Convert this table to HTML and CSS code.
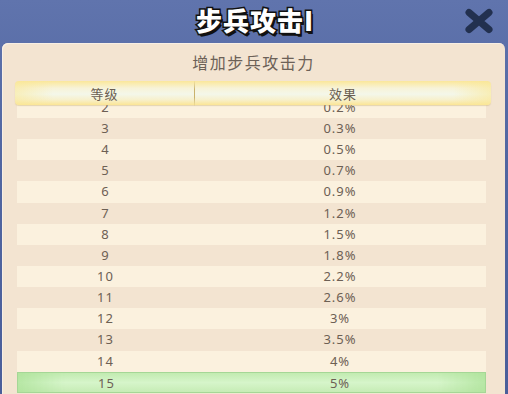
FILE: index.html
```html
<!DOCTYPE html>
<html lang="zh">
<head>
<meta charset="utf-8">
<title>步兵攻击I</title>
<link rel="stylesheet" href="styles.css">
</head>
<body>
<div class="window">
  <div class="titlebar">
    <h1 class="title">步兵攻击I</h1>
    <button class="close" aria-label="关闭">
      <svg width="30" height="26" viewBox="0 0 30 26"><path d="M5 4.5 L25 21.5 M25 4.5 L5 21.5" stroke="#22304f" stroke-width="7" stroke-linecap="round" fill="none"/></svg>
    </button>
  </div>
  <div class="panel">
    <div class="subtitle">增加步兵攻击力</div>
    <div class="thead">
      <div class="th">等级</div>
      <div class="th th-sep">效果</div>
    </div>
    <div class="list">
      <div class="rows">
        <div class="row"><span>2</span><span>0.2%</span></div>
        <div class="row"><span>3</span><span>0.3%</span></div>
        <div class="row"><span>4</span><span>0.5%</span></div>
        <div class="row"><span>5</span><span>0.7%</span></div>
        <div class="row"><span>6</span><span>0.9%</span></div>
        <div class="row"><span>7</span><span>1.2%</span></div>
        <div class="row"><span>8</span><span>1.5%</span></div>
        <div class="row"><span>9</span><span>1.8%</span></div>
        <div class="row"><span>10</span><span>2.2%</span></div>
        <div class="row"><span>11</span><span>2.6%</span></div>
        <div class="row"><span>12</span><span>3%</span></div>
        <div class="row"><span>13</span><span>3.5%</span></div>
        <div class="row"><span>14</span><span>4%</span></div>
        <div class="row current"><span>15</span><span>5%</span></div>
      </div>
    </div>
  </div>
</div>
</body>
</html>
```
FILE: styles.css
```css
html, body {
  margin: 0;
  padding: 0;
}
body {
  width: 508px;
  height: 394px;
  overflow: hidden;
  background: #4d609c;
  font-family: "Noto Sans", "Noto Sans CJK SC", sans-serif;
}
.window {
  display: flex;
  flex-direction: column;
  height: 394px;
  background: linear-gradient(to bottom, #6074ad 0%, #5166a1 40%, #4a5e9a 100%);
}
.titlebar {
  position: relative;
  height: 43px;
  flex: none;
  display: flex;
  align-items: center;
  justify-content: center;
}
.title {
  margin: 0;
  padding-left: 2px;
  font-family: "Noto Sans CJK SC", sans-serif;
  font-size: 26px;
  font-weight: 900;
  letter-spacing: 1px;
  line-height: 30px;
  color: #ffffff;
  -webkit-text-stroke: 3px #111111;
  paint-order: stroke fill;
  text-shadow: 1px 2px 0 #111111, 2px 3px 0 #111111;
  margin-top: -3px;
}
.close {
  position: absolute;
  left: 464px;
  top: 8px;
  width: 30px;
  height: 26px;
  padding: 0;
  border: 0;
  background: none;
  display: block;
}
.close svg {
  display: block;
}
.panel {
  flex: 1;
  margin-left: 2px;
  width: 503px;
  background: #f3e4d1;
  border-radius: 6px 6px 0 0;
  box-shadow: inset 1px 1px 0 #f8efe4;
  display: flex;
  flex-direction: column;
  overflow: hidden;
}
.subtitle {
  height: 38px;
  flex: none;
  box-sizing: border-box;
  padding-top: 7px;
  line-height: 24px;
  text-align: center;
  font-family: "Noto Sans CJK SC", sans-serif;
  font-size: 16px;
  letter-spacing: 1.5px;
  color: #6c6157;
}
.thead {
  flex: none;
  margin: 0 14px 0 13px;
  height: 24px;
  border-radius: 4px;
  display: grid;
  grid-template-columns: 179px 1fr;
  background:
    linear-gradient(to right, rgba(250, 232, 150, 0.55) 0%, rgba(255, 255, 255, 0) 8%, rgba(255, 255, 255, 0) 92%, rgba(250, 232, 150, 0.6) 100%),
    linear-gradient(to bottom, #fbe79a 0%, #f7f3d8 30%, #f4f7ea 55%, #f7f0cc 78%, #fbe595 100%);
  box-shadow: 0 1px 1px rgba(190, 160, 90, 0.35);
  position: relative;
  z-index: 1;
}
.th {
  text-align: center;
  font-family: "Noto Sans CJK SC", sans-serif;
  font-size: 13px;
  letter-spacing: 1px;
  line-height: 25px;
  color: #6a5e52;
}
.th-sep {
  border-left: 1px solid;
  border-image: linear-gradient(to bottom, rgba(200, 180, 110, 0), #c9b26c 35%, #c9b26c 65%, rgba(200, 180, 110, 0)) 1;
}
.list {
  flex: 1;
  overflow: hidden;
  margin: 0 19px 0 15px;
}
.rows {
  margin-top: -8.15px;
}
.row {
  height: 21.15px;
  display: grid;
  grid-template-columns: 177px 1fr;
  align-items: center;
  font-size: 13px;
  letter-spacing: 1px;
  color: #6d6054;
}
.row span {
  text-align: center;
  line-height: 21px;
}
.row:nth-child(odd) {
  background: #fbf1de;
}
.row.current {
  box-sizing: border-box;
  border: 1px solid #a5d796;
  background:
    linear-gradient(to right, rgba(170, 225, 150, 0.7) 0%, rgba(255, 255, 255, 0) 10%, rgba(255, 255, 255, 0) 90%, rgba(170, 225, 150, 0.7) 100%),
    linear-gradient(to bottom, #c2ebb1 0%, #d6f5ca 50%, #c6ecb5 100%);
}
```
